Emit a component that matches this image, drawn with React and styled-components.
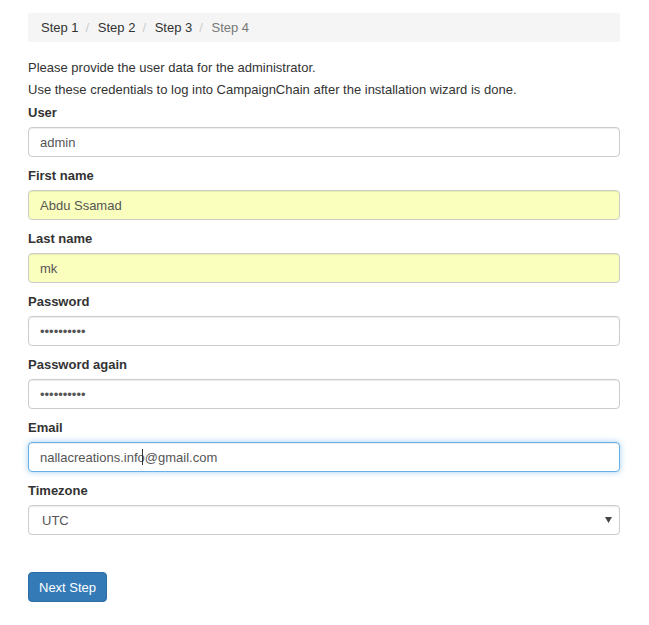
import React from 'react';
import styled, { createGlobalStyle } from 'styled-components';

const GlobalStyle = createGlobalStyle`
  html, body {
    margin: 0;
    padding: 0;
    background: #fff;
  }
  body {
    font-family: "Liberation Sans", Arial, sans-serif;
    font-size: 13px;
    color: #333;
  }
  * {
    box-sizing: border-box;
  }
`;

const steps = ['Step 1', 'Step 2', 'Step 3', 'Step 4'];

const fields = [
  { name: 'user', label: 'User', value: 'admin' },
  { name: 'firstname', label: 'First name', value: 'Abdu Ssamad', autofill: true },
  { name: 'lastname', label: 'Last name', value: 'mk', autofill: true },
  { name: 'password', label: 'Password', value: 'abcdefghij', type: 'password' },
  { name: 'password2', label: 'Password again', value: 'abcdefghij', type: 'password' },
  { name: 'email', label: 'Email', value: 'nallacreations.info@gmail.com', focused: true },
];

export default function App() {
  return (
    <>
      <GlobalStyle />
      <Container>
        <Breadcrumb>
          {steps.map((s, i) => (
            <Crumb key={s} active={i === steps.length - 1} first={i === 0}>
              {s}
            </Crumb>
          ))}
        </Breadcrumb>

        <Intro>Please provide the user data for the administrator.</Intro>
        <Intro last>Use these credentials to log into CampaignChain after the installation wizard is done.</Intro>

        <form onSubmit={(e) => e.preventDefault()}>
          {fields.map((f) => (
            <FormGroup key={f.name}>
              <Label htmlFor={f.name}>{f.label}</Label>
              <InputWrap>
                <Input
                  id={f.name}
                  type={f.type || 'text'}
                  defaultValue={f.value}
                  autofill={f.autofill}
                  focused={f.focused}
                />
                {f.focused && <Caret />}
              </InputWrap>
            </FormGroup>
          ))}

          <FormGroup>
            <Label htmlFor="timezone">Timezone</Label>
            <InputWrap>
              <Select id="timezone" defaultValue="UTC">
                <option value="UTC">UTC</option>
                <option value="Europe/Berlin">Europe/Berlin</option>
              </Select>
              <Arrow viewBox="0 0 7 6" width="7" height="6">
                <path d="M0 0h7L3.5 6z" fill="#444" />
              </Arrow>
            </InputWrap>
          </FormGroup>

          <Actions>
            <Button type="submit">Next Step</Button>
          </Actions>
        </form>
      </Container>
    </>
  );
}

const Container = styled.div`
  width: 592px;
  margin-left: 28px;
  padding-top: 13px;
`;

const Breadcrumb = styled.ol`
  list-style: none;
  margin: 0 0 16px;
  padding: 6px 13px;
  line-height: 17px;
  background: #f5f5f5;
  border-radius: 2px;
`;

const Crumb = styled.li`
  display: inline;
  color: ${(p) => (p.active ? '#777' : '#333')};
  &::before {
    content: ${(p) => (p.first ? 'none' : '"/\\00a0"')};
    padding: 0 5px 0 7px;
    color: #ccc;
  }
`;

const Intro = styled.p`
  margin: 0 0 ${(p) => (p.last ? '5px' : '3px')};
  line-height: 19px;
`;

const FormGroup = styled.div`
  margin-bottom: 10px;
`;

const Label = styled.label`
  display: block;
  font-weight: bold;
  line-height: 18px;
  margin-bottom: 5px;
`;

const InputWrap = styled.div`
  position: relative;
`;

const Input = styled.input`
  display: block;
  width: 100%;
  height: 30px;
  padding: 5px 11px;
  font: inherit;
  color: #555;
  background: ${(p) => (p.autofill ? '#faffbd' : '#fff')};
  border: 1px solid ${(p) => (p.focused ? '#66afe9' : '#ccc')};
  border-radius: 4px;
  outline: none;
  box-shadow: ${(p) =>
    p.focused
      ? 'inset 0 1px 1px rgba(0,0,0,.075), 0 0 6px rgba(102,175,233,.6)'
      : 'inset 0 1px 1px rgba(0,0,0,.075)'};
`;

const Caret = styled.span`
  position: absolute;
  left: 114px;
  top: 7px;
  width: 1px;
  height: 16px;
  background: #333;
`;

const Select = styled.select`
  display: block;
  width: 100%;
  height: 30px;
  padding: 4px 13px;
  font: inherit;
  color: #555;
  background: #fff;
  border: 1px solid #ccc;
  border-radius: 4px;
  appearance: none;
  outline: none;
  box-shadow: inset 0 1px 1px rgba(0,0,0,.075);
`;

const Arrow = styled.svg`
  position: absolute;
  right: 8px;
  top: 12px;
  pointer-events: none;
`;

const Actions = styled.div`
  padding-top: 27px;
`;

const Button = styled.button`
  font: inherit;
  color: #fff;
  background: #337ab7;
  border: 1px solid #2e6da4;
  border-radius: 4px;
  height: 30px;
  padding: 0 10px;
  cursor: pointer;
`;
